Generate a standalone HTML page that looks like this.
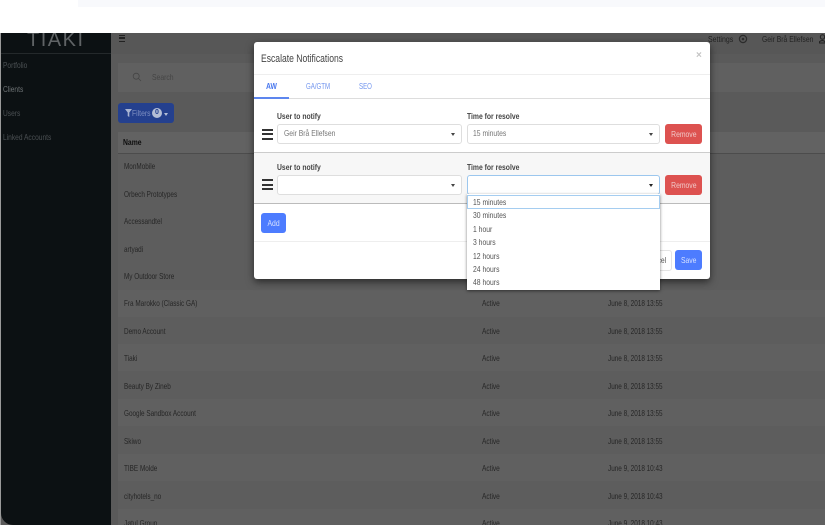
<!DOCTYPE html>
<html><head><meta charset="utf-8"><style>
html,body{margin:0;padding:0;width:825px;height:525px;overflow:hidden;background:#fff}
body{position:relative;font-family:"Liberation Sans",sans-serif}
#r{position:absolute;left:0;top:0;width:825px;height:525px;overflow:hidden;filter:blur(.3px)}
.a,.t{position:absolute}
.t{white-space:nowrap;line-height:12px;height:12px;font-size:8.5px;color:#262626;transform:scaleX(.8);transform-origin:0 50%}
.n{left:124px;transform:scaleX(.75)}.s{left:482px;transform:scaleX(.77)}.d{left:608px;transform:scaleX(.75)}
.nav{left:3px;color:#4b5053;transform:scaleX(.78)}
.inp{position:absolute;height:18px;background:#fff;border:1px solid #dedede;border-radius:3px}
.arr{position:absolute;width:0;height:0;border-left:2.5px solid transparent;border-right:2.5px solid transparent;border-top:3px solid #444}
.lab{font-weight:bold;color:#444}
.btn{position:absolute;border-radius:3px;color:#f0c8c8;font-size:8.5px;text-align:center;line-height:20px;background:#dd5250;width:37px;height:20px}
.btn span{display:inline-block;transform:scaleX(.8)}
.opt{left:473px;color:#555}
.bars{position:absolute;width:11px;height:7px;border-top:2px solid #333;border-bottom:2px solid #333}
.bars:after{content:"";position:absolute;left:0;right:0;top:2.5px;height:2px;background:#333}
</style></head><body><div id="r">
<div class="a" style="left:78px;top:0;width:747px;height:7px;background:#f8f9fc"></div>
<div class="a" style="left:0;top:33px;width:825px;height:492px;background:#5a5a5a"></div>
<div class="a" style="left:1px;top:33px;width:110px;height:492px;background:#0c1113;border-bottom-left-radius:12px"></div>
<div class="a" style="left:0;top:33px;width:1px;height:492px;background:#9a9a9a"></div>
<div class="a" style="left:1px;top:53px;width:110px;height:1px;background:#24292b"></div>
<div class="t" style="left:27px;top:30px;height:21px;line-height:21px;font-size:20px;letter-spacing:1.5px;color:#5f6365;transform:none;clip-path:inset(3px 0 0 0)">TIAKI</div>
<div class="t nav" style="top:59px">Portfolio</div>
<div class="t nav" style="top:83px;color:#6d7274">Clients</div>
<div class="t nav" style="top:107px">Users</div>
<div class="t nav" style="top:131px">Linked Accounts</div>

<div class="a" style="left:111px;top:33px;width:714px;height:21px;background:#575757"></div>
<div class="a" style="left:119px;top:35px;width:6px;height:5px;border-top:1.3px solid #222;border-bottom:1.3px solid #222"></div>
<div class="a" style="left:119px;top:37.4px;width:6px;height:1.3px;background:#222"></div>
<div class="t" style="left:708px;top:33px;color:#222;transform:scaleX(.82)">Settings</div>
<svg class="a" style="left:738px;top:34px" width="10" height="10" viewBox="0 0 10 10"><circle cx="5" cy="5" r="3.6" fill="none" stroke="#2b2b2b" stroke-width="1.2"/><circle cx="5" cy="5" r="1.3" fill="#2b2b2b"/></svg>
<div class="t" style="left:762px;top:33px;color:#222;transform:scaleX(.8)">Geir Brå Ellefsen</div>
<svg class="a" style="left:819px;top:34px" width="6" height="10" viewBox="0 0 6 10"><circle cx="3.5" cy="3" r="2.2" fill="none" stroke="#222"/><path d="M.5 9V7.6Q3.5 5.5 6 7.6V9Z" fill="none" stroke="#222"/></svg>

<div class="a" style="left:118px;top:63px;width:707px;height:29px;background:#606060"></div>
<svg class="a" style="left:132px;top:72px" width="10" height="10" viewBox="0 0 10 10"><circle cx="4.2" cy="4.2" r="3" fill="none" stroke="#454545" stroke-width=".8"/><path d="M6.5 6.5L9 9" stroke="#454545" stroke-width=".8"/></svg>
<div class="t" style="left:152px;top:71px;color:#454545">Search</div>

<div class="a" style="left:118px;top:103px;width:56px;height:20px;background:#24408e;border-radius:3px"></div>
<svg class="a" style="left:125px;top:109px" width="7" height="8" viewBox="0 0 7 8"><path d="M0 0H7L4.3 3.5V8L2.7 7V3.5Z" fill="#aab5d2"/></svg>
<div class="t" style="left:132px;top:107px;color:#7f90c2">Filters</div>
<div class="a" style="left:152px;top:108px;width:10px;height:10px;border-radius:5px;background:#b5bfd6"></div>
<div class="t" style="left:155px;top:107px;color:#24408e;font-size:7px;font-weight:bold;transform:none">0</div>
<div class="arr" style="left:164px;top:112.5px;border-top-color:#b5bfd6"></div>

<div class="a" style="left:118px;top:132px;width:707px;height:21px;background:#626262"></div>
<div class="t" style="left:123px;top:136px;font-weight:bold;color:#0d0d0d">Name</div>
<div class="a" style="left:118px;top:153px;width:707px;height:1px;background:#4c4c4c"></div>
<div class="a" style="left:118px;top:154px;width:707px;height:371px;background:#5d5d5d"></div>
<div class="a" style="left:118px;top:290px;width:707px;height:27px;background:#606060"></div>
<div class="a" style="left:118px;top:344px;width:707px;height:27px;background:#606060"></div>
<div class="a" style="left:118px;top:399px;width:707px;height:27px;background:#606060"></div>
<div class="a" style="left:118px;top:454px;width:707px;height:27px;background:#606060"></div>
<div class="a" style="left:118px;top:509px;width:707px;height:16px;background:#606060"></div>

<div class="t n" style="top:160px">MonMobile</div>
<div class="t n" style="top:188px">Orbech Prototypes</div>
<div class="t n" style="top:215px">Accessandtel</div>
<div class="t n" style="top:243px">artyadi</div>
<div class="t n" style="top:270px">My Outdoor Store</div>
<div class="t n" style="top:297px">Fra Marokko (Classic GA)</div>
<div class="t n" style="top:325px">Demo Account</div>
<div class="t n" style="top:352px">Tiaki</div>
<div class="t n" style="top:380px">Beauty By Zineb</div>
<div class="t n" style="top:407px">Google Sandbox Account</div>
<div class="t n" style="top:435px">Skiwo</div>
<div class="t n" style="top:462px">TIBE Molde</div>
<div class="t n" style="top:490px">cityhotels_no</div>
<div class="t n" style="top:517px">Jøtul Group</div>

<div class="t s" style="top:297px">Active</div><div class="t d" style="top:297px">June 8, 2018 13:55</div>
<div class="t s" style="top:325px">Active</div><div class="t d" style="top:325px">June 8, 2018 13:55</div>
<div class="t s" style="top:352px">Active</div><div class="t d" style="top:352px">June 8, 2018 13:55</div>
<div class="t s" style="top:380px">Active</div><div class="t d" style="top:380px">June 8, 2018 13:55</div>
<div class="t s" style="top:407px">Active</div><div class="t d" style="top:407px">June 8, 2018 13:55</div>
<div class="t s" style="top:435px">Active</div><div class="t d" style="top:435px">June 8, 2018 13:55</div>
<div class="t s" style="top:462px">Active</div><div class="t d" style="top:462px">June 9, 2018 10:43</div>
<div class="t s" style="top:490px">Active</div><div class="t d" style="top:490px">June 9, 2018 10:43</div>
<div class="t s" style="top:517px">Active</div><div class="t d" style="top:517px">June 9, 2018 10:43</div>

<div class="a" style="left:254px;top:42px;width:456px;height:237px;background:#fff;border-radius:3px;box-shadow:0 3px 8px rgba(0,0,0,.55)"></div>
<div class="t" style="left:261px;top:52px;font-size:11px;color:#444;height:14px;line-height:14px;transform:scaleX(.78)">Escalate Notifications</div>
<div class="t" style="left:696px;top:50px;font-size:10px;color:#c4c4c4;font-weight:bold;transform:none">×</div>
<div class="a" style="left:254px;top:74px;width:456px;height:1px;background:#eee"></div>
<div class="a" style="left:254px;top:98px;width:456px;height:1px;background:#ddd"></div>
<div class="a" style="left:254px;top:97px;width:35px;height:2px;background:#5d86ee"></div>
<div class="t" style="left:266px;top:80px;color:#4a78ee;font-weight:bold">AW</div>
<div class="t" style="left:306px;top:80px;color:#6f93ee;transform:scaleX(.72)">GA/GTM</div>
<div class="t" style="left:359px;top:80px;color:#6f93ee;transform:scaleX(.72)">SEO</div>

<div class="a" style="left:254px;top:152px;width:456px;height:52px;background:#f7f7f7;border-top:1px solid #ccc;border-bottom:1px solid #bbb;box-sizing:border-box"></div>

<div class="t lab" style="left:277px;top:110px">User to notify</div>
<div class="t lab" style="left:467px;top:110px">Time for resolve</div>
<div class="bars" style="left:261.5px;top:128.5px"></div>
<div class="inp" style="left:277px;top:124px;width:183px"></div>
<div class="t" style="left:284px;top:127px;color:#777">Geir Brå Ellefsen</div>
<div class="arr" style="left:451px;top:133px"></div>
<div class="inp" style="left:467px;top:124px;width:191px"></div>
<div class="t" style="left:473px;top:127px;color:#777">15 minutes</div>
<div class="arr" style="left:649px;top:133px"></div>
<div class="btn" style="left:665px;top:124px"><span>Remove</span></div>

<div class="t lab" style="left:277px;top:161px">User to notify</div>
<div class="t lab" style="left:467px;top:161px">Time for resolve</div>
<div class="bars" style="left:261.5px;top:179px"></div>
<div class="inp" style="left:277px;top:175px;width:183px"></div>
<div class="arr" style="left:451px;top:184px"></div>
<div class="inp" style="left:467px;top:175px;width:191px;border-color:#9cc7ee"></div>
<div class="arr" style="left:649px;top:184px;border-top-color:#222"></div>
<div class="btn" style="left:665px;top:175px"><span>Remove</span></div>

<div class="btn" style="left:261px;top:213px;width:25px;background:#4d7cff;color:#d5e0ff"><span>Add</span></div>
<div class="a" style="left:254px;top:241px;width:456px;height:1px;background:#eee"></div>
<div class="a" style="left:640px;top:250px;width:30px;height:19px;background:#fff;border:1px solid #e4e4e4;border-radius:3px"></div>
<div class="t" style="left:645px;top:254px;color:#555">Cancel</div>
<div class="btn" style="left:675px;top:250px;width:27px;background:#4d7cff;color:#d5e0ff"><span>Save</span></div>

<div class="a" style="left:467px;top:194px;width:193px;height:96px;background:#fff;box-shadow:0 1px 3px rgba(0,0,0,.5)"></div>
<div class="a" style="left:467px;top:195px;width:191px;height:12px;border:1px solid #a5cdf0"></div>
<div class="t opt" style="top:196px">15 minutes</div>
<div class="t opt" style="top:209px">30 minutes</div>
<div class="t opt" style="top:223px">1 hour</div>
<div class="t opt" style="top:236px">3 hours</div>
<div class="t opt" style="top:250px">12 hours</div>
<div class="t opt" style="top:263px">24 hours</div>
<div class="t opt" style="top:276px">48 hours</div>
</div></body></html>
